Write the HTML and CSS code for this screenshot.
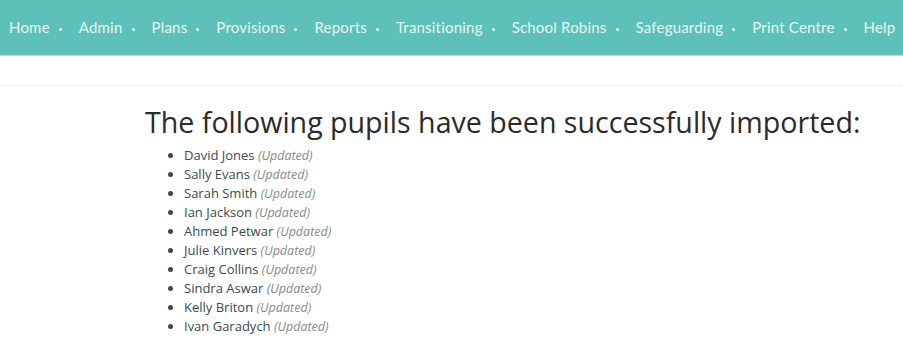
FILE: index.html
```html
<!DOCTYPE html>
<html lang="en">
<head>
    <meta charset="UTF-8">
    <title>Import Pupils</title>
    <link rel="stylesheet" href="styles.css">
</head>
<body>
    <div class="navbar">
        <ul class="nav-menu">
            <li class="nav-item has-sub">Home</li>
            <li class="nav-item has-sub">Admin</li>
            <li class="nav-item has-sub">Plans</li>
            <li class="nav-item has-sub">Provisions</li>
            <li class="nav-item has-sub">Reports</li>
            <li class="nav-item has-sub">Transitioning</li>
            <li class="nav-item has-sub">School Robins</li>
            <li class="nav-item has-sub">Safeguarding</li>
            <li class="nav-item has-sub">Print Centre</li>
            <li class="nav-item">Help</li>
        </ul>
    </div>

    <div class="sub-bar"></div>

    <div class="content">
        <h1 class="title">The following pupils have been successfully imported:</h1>
        <ul class="pupil-list">
            <li>David Jones <span class="status">(Updated)</span></li>
            <li>Sally Evans <span class="status">(Updated)</span></li>
            <li>Sarah Smith <span class="status">(Updated)</span></li>
            <li>Ian Jackson <span class="status">(Updated)</span></li>
            <li>Ahmed Petwar <span class="status">(Updated)</span></li>
            <li>Julie Kinvers <span class="status">(Updated)</span></li>
            <li>Craig Collins <span class="status">(Updated)</span></li>
            <li>Sindra Aswar <span class="status">(Updated)</span></li>
            <li>Kelly Briton <span class="status">(Updated)</span></li>
            <li>Ivan Garadych <span class="status">(Updated)</span></li>
        </ul>
    </div>
</body>
</html>
```

FILE: styles.css
```css
* {
    box-sizing: border-box;
    margin: 0;
    padding: 0;
}

body {
    font-family: "Open Sans", "Liberation Sans", sans-serif;
    background-color: #fff;
    color: #333;
}

.navbar {
    background-color: #5dc0b9;
    height: 56px;
    border-bottom: 1px solid #a9e2dd;
    white-space: nowrap;
    overflow: hidden;
}

.nav-menu {
    list-style: none;
    display: flex;
    align-items: center;
    height: 54px;
    padding-left: 9px;
    gap: 17px;
}

.nav-item {
    font-family: Lato, "Noto Sans", sans-serif;
    font-size: 15px;
    color: #e6f6f4;
    letter-spacing: 0.2px;
}

.nav-item.has-sub::after {
    content: "";
    display: inline-block;
    width: 3px;
    height: 3px;
    border-radius: 50%;
    background-color: #e6f6f4;
    margin-left: 9px;
    vertical-align: middle;
}

.sub-bar {
    height: 30px;
    border-bottom: 1px solid #f2f2f2;
}

.content {
    padding: 18px 0 0 145px;
}

.title {
    font-size: 28.6px;
    font-weight: 400;
    color: #2b2b2b;
    line-height: 36px;
    margin-bottom: 6px;
}

.pupil-list {
    padding-left: 39px;
    font-size: 13px;
    line-height: 19px;
    color: #3a4a4f;
}

.status {
    font-style: italic;
    color: #888;
    font-size: 12.5px;
}
```
